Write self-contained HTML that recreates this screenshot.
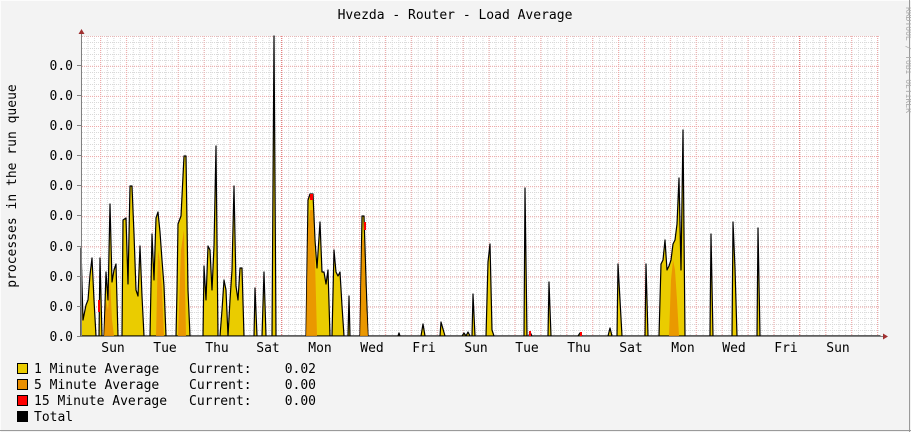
<!DOCTYPE html>
<html><head><meta charset="utf-8"><style>
html,body{margin:0;padding:0;background:#f3f3f3}
svg{display:block}
text{font-family:"DejaVu Sans Mono","Liberation Mono",monospace;font-size:13px;fill:#000}
</style></head><body>
<svg width="911" height="432" viewBox="0 0 911 432" xmlns="http://www.w3.org/2000/svg">
<defs>
<pattern id="minv" x="81" y="0" width="6.475" height="432" patternUnits="userSpaceOnUse"><line x1="0.5" y1="0" x2="0.5" y2="432" stroke="#d8d8d8" stroke-width="1" stroke-dasharray="1,1"/></pattern>
<pattern id="minh" x="0" y="0" width="911" height="6" patternUnits="userSpaceOnUse"><line x1="0" y1="0.5" x2="911" y2="0.5" stroke="#d8d8d8" stroke-width="1" stroke-dasharray="1,1"/></pattern>
<pattern id="majv" x="100" y="0" width="25.9" height="432" patternUnits="userSpaceOnUse"><line x1="0.5" y1="0" x2="0.5" y2="432" stroke="#f0a8a8" stroke-width="1" stroke-dasharray="1,1"/></pattern>
<pattern id="majh" x="0" y="5.6" width="911" height="30.1" patternUnits="userSpaceOnUse"><line x1="0" y1="0.5" x2="911" y2="0.5" stroke="#f0a8a8" stroke-width="1" stroke-dasharray="1,1"/></pattern>
</defs>
<rect x="0" y="0" width="911" height="432" fill="#f3f3f3"/>
<line x1="0" y1="0.5" x2="911" y2="0.5" stroke="#fcfcfc"/>
<line x1="0.5" y1="0" x2="0.5" y2="432" stroke="#fcfcfc"/>
<line x1="0" y1="430.5" x2="911" y2="430.5" stroke="#9a9a9a"/>
<line x1="909.5" y1="0" x2="909.5" y2="432" stroke="#9a9a9a"/>
<rect x="81" y="36" width="799" height="300" fill="#fff"/>
<g>
<rect x="81" y="36" width="799" height="300" fill="url(#minh)"/>
<rect x="81" y="36" width="799" height="300" fill="url(#minv)"/>
<rect x="81" y="36" width="799" height="300" fill="url(#majh)"/>
<rect x="81" y="36" width="799" height="300" fill="url(#majv)"/>
<line x1="281.5" y1="36" x2="281.5" y2="336" stroke="#e88080" stroke-dasharray="1,1"/>
<line x1="799.5" y1="36" x2="799.5" y2="336" stroke="#e88080" stroke-dasharray="1,1"/>
</g>
<polygon fill="#eacc00" stroke="#000" stroke-width="1.2" stroke-linejoin="round" points="81,336 81,248 83,320 86,305 88,300 90,275 92,258 94,300 96,336 99,336 100,258 102,336 104,336 106,272 108,300 110,204 112,282 114,270 116,264 118,336 122,336 123,220 126,218 128,284 130,186 132,186 134,234 136,290 138,296 140,246 142,296 144,336 150,336 152,234 154,280 156,218 158,212 160,232 162,260 164,286 166,336 176,336 177,290 178,224 181,216 184,156 186,156 188,290 190,336 203,336 204,266 206,300 208,246 210,250 212,290 214,246 216,146 218,336 220,336 222,310 224,280 226,290 228,336 230,300 232,270 234,186 236,286 238,300 240,268 242,268 244,336 254,336 255,288 257,336 262,336 264,272 266,336 272,336 274,36 276,336 306,336 308,200 310,194 313,194 315,240 317,268 320,222 322,272 324,272 326,284 328,270 330,336 332,336 334,250 336,272 338,276 340,272 342,306 344,336 348,336 349,296 350,336 360,336 362,216 364,216 366,280 368,336 398,336 399,333 400,336 421,336 423,324 425,336 440,336 441,322 445,336 462,336 464,333 466,336 468,332 470,336 472,336 473,294 475,336 486,336 488,262 490,244 492,330 494,336 524,336 525,188 527,336 529,336 530,332 532,336 548,336 549,282 551,336 578,336 580,333 582,336 608,336 610,328 612,336 617,336 618,264 620,300 622,336 645,336 646,264 648,336 659,336 661,264 663,260 665,240 667,270 669,266 671,260 673,244 675,240 677,224 679,178 681,270 683,130 685,336 710,336 711,234 713,336 732,336 733,222 735,268 737,336 757,336 758,228 760,336 880,336"/>
<g fill="#ea8f00" opacity="0.85">
<polygon points="104,336 106,300 108,310 110,280 112,320 114,336"/>
<polygon points="156,336 158,250 160,262 162,290 164,336"/>
<polygon points="178,336 181,250 184,230 186,336"/>
<polygon points="306,336 308,230 310,210 313,210 315,260 317,336"/>
<polygon points="360,336 362,240 364,240 366,300 368,336"/>
<polygon points="669,336 671,280 673,260 675,270 677,300 679,336"/>
</g>
<g fill="#ff0000">
<rect x="98" y="300" width="2" height="12"/><rect x="364" y="222" width="2" height="8"/><rect x="310" y="194" width="3" height="6"/><rect x="580" y="332" width="2" height="4"/><rect x="529" y="331" width="2" height="5"/>
</g>
<line x1="81.5" y1="30" x2="81.5" y2="337" stroke="#808080"/>
<line x1="77" y1="336.5" x2="884" y2="336.5" stroke="#808080"/>
<polygon points="78.5,34 84.5,34 81.5,29" fill="#a03030"/>
<polygon points="883,333.5 883,339.5 888,336.5" fill="#a03030"/>
<g stroke="#808080"><line x1="77" y1="306.5" x2="81" y2="306.5"/><line x1="77" y1="276.5" x2="81" y2="276.5"/><line x1="77" y1="246.5" x2="81" y2="246.5"/><line x1="77" y1="215.5" x2="81" y2="215.5"/><line x1="77" y1="185.5" x2="81" y2="185.5"/><line x1="77" y1="155.5" x2="81" y2="155.5"/><line x1="77" y1="125.5" x2="81" y2="125.5"/><line x1="77" y1="95.5" x2="81" y2="95.5"/><line x1="77" y1="65.5" x2="81" y2="65.5"/></g>
<text x="455" y="19" text-anchor="middle">Hvezda - Router - Load Average</text>
<g text-anchor="end">
<text x="73" y="341">0.0</text><text x="73" y="311">0.0</text><text x="73" y="281">0.0</text><text x="73" y="251">0.0</text><text x="73" y="220">0.0</text><text x="73" y="190">0.0</text><text x="73" y="160">0.0</text><text x="73" y="130">0.0</text><text x="73" y="100">0.0</text><text x="73" y="70">0.0</text>
</g>
<text transform="translate(16,186) rotate(-90)" text-anchor="middle">processes in the run queue</text>
<text transform="translate(906,60) rotate(90)" text-anchor="middle" style="font-size:8px;fill:#aaa">RRDTOOL / TOBI OETIKER</text>
<g text-anchor="middle">
<text x="113" y="352">Sun</text><text x="165" y="352">Tue</text><text x="217" y="352">Thu</text><text x="268" y="352">Sat</text><text x="320" y="352">Mon</text><text x="372" y="352">Wed</text><text x="424" y="352">Fri</text><text x="476" y="352">Sun</text><text x="527" y="352">Tue</text><text x="579" y="352">Thu</text><text x="631" y="352">Sat</text><text x="683" y="352">Mon</text><text x="734" y="352">Wed</text><text x="786" y="352">Fri</text><text x="838" y="352">Sun</text>
</g>
<rect x="17.5" y="363.5" width="10" height="10" fill="#eacc00" stroke="#000"/>
<rect x="17.5" y="379.5" width="10" height="10" fill="#ea8f00" stroke="#000"/>
<rect x="17.5" y="395.5" width="10" height="10" fill="#ff0000" stroke="#000"/>
<rect x="17.5" y="411.5" width="10" height="10" fill="#000" stroke="#000"/>
<text x="34" y="373">1 Minute Average</text><text x="189" y="373">Current:</text><text x="316" y="373" text-anchor="end">0.02</text>
<text x="34" y="389">5 Minute Average</text><text x="189" y="389">Current:</text><text x="316" y="389" text-anchor="end">0.00</text>
<text x="34" y="405">15 Minute Average</text><text x="189" y="405">Current:</text><text x="316" y="405" text-anchor="end">0.00</text>
<text x="34" y="421">Total</text>
</svg>
</body></html>
